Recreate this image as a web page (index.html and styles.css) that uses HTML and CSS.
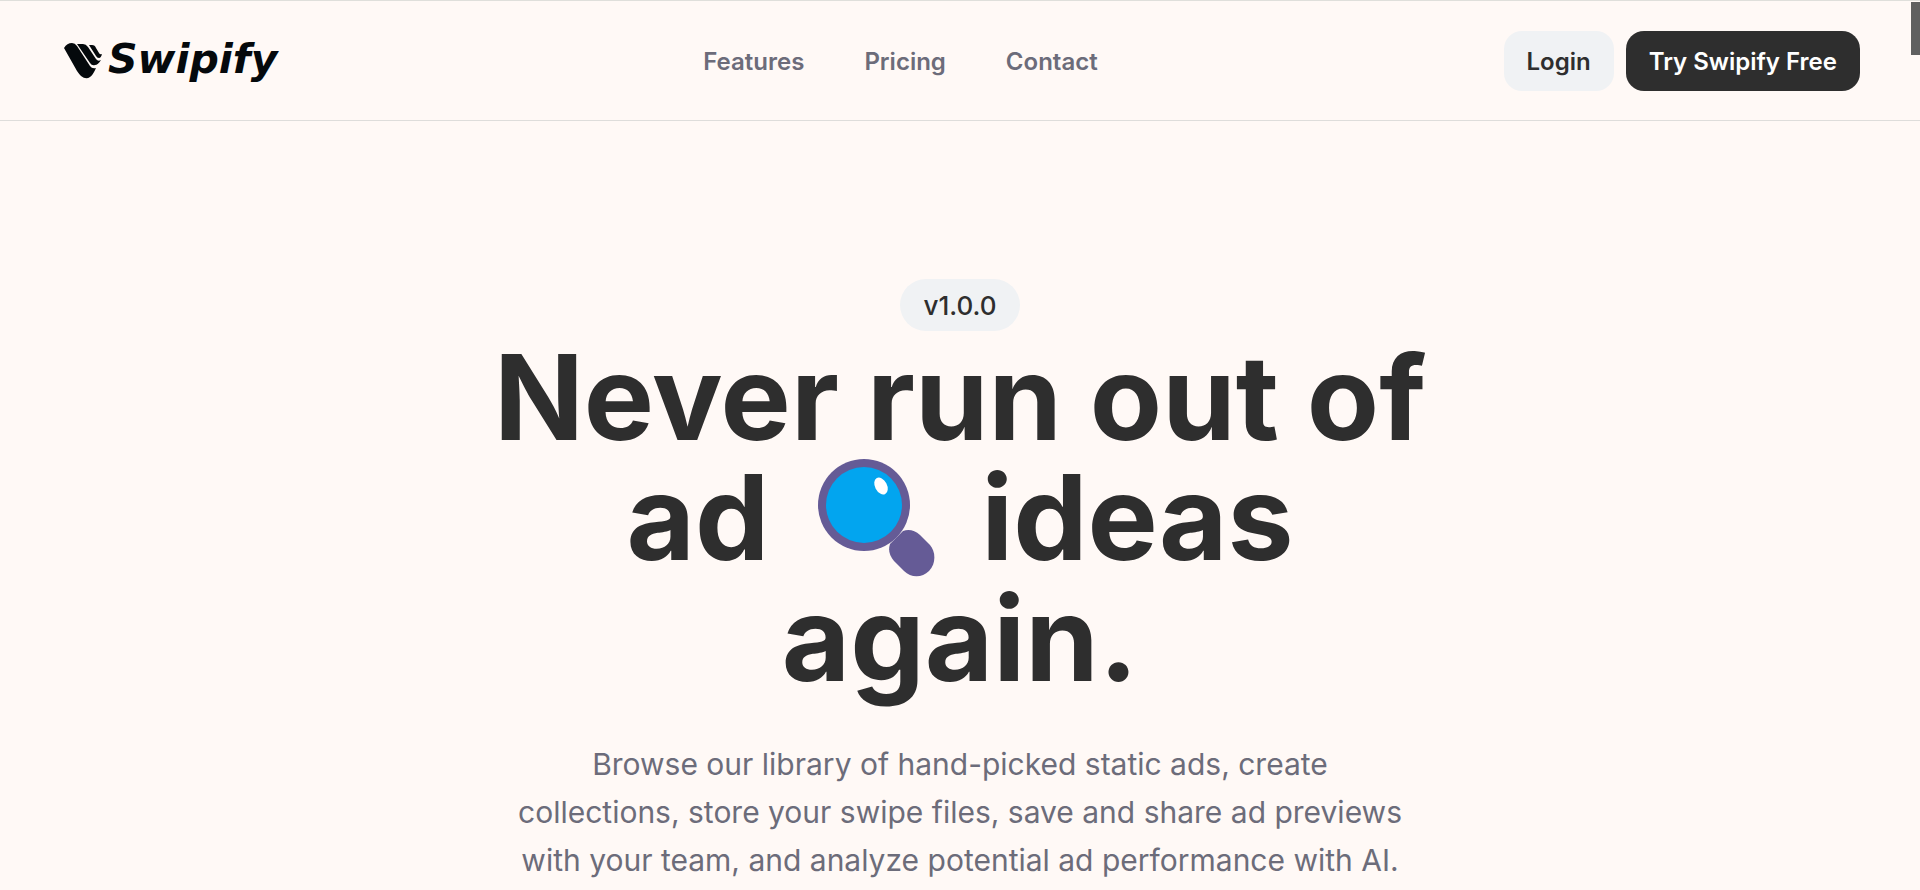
FILE: index.html
```html
<!DOCTYPE html>
<html lang="en">
<head>
<meta charset="utf-8">
<meta name="viewport" content="width=device-width, initial-scale=1">
<title>Swipify</title>
<link rel="stylesheet" href="styles.css">
</head>
<body>
<header class="header">
  <a class="logo" href="#">
    <svg class="logo-mark" viewBox="0 0 40 38" aria-hidden="true">
      <path d="M0 6Q3 1 8 1Q11 1 13 4L26 24Q28 27 32 26Q29 33 26 35Q22 38 17 34Q15 32 13 29Z"/>
      <path d="M13 2H19Q22 2 24 5L32 17Q34 20 37 18Q34 23 31 23Q28 24 26 21Z"/>
      <path d="M25 3H28Q31 3 32 6L35 11Q36 13 38 12Q37 16 35 16Q33 16 32 14Z"/>
    </svg>
    <span class="logo-text">Swipify</span>
  </a>
  <nav class="nav">
    <a href="#features">Features</a>
    <a href="#pricing">Pricing</a>
    <a href="#contact">Contact</a>
  </nav>
  <div class="actions">
    <button class="button" type="button">Login</button>
    <button class="button button-dark" type="button">Try Swipify Free</button>
  </div>
</header>
<main class="hero">
  <span class="badge">v1.0.0</span>
  <h1 class="title">Never run out of<br>ad <svg class="title-icon" viewBox="0 0 118 120" role="img" aria-label="Magnifying glass">
    <path class="glass-frame" d="M86 73Q95 70 103 77L113 87C119 94 119 106 112 113C105 120 94 120 87 113L77 103Q70 95 73 86Z"/>
    <circle class="glass-frame" cx="47" cy="47" r="46"/>
    <circle class="glass-lens" cx="47" cy="47" r="38"/>
    <ellipse class="glass-shine" cx="64" cy="28" rx="6" ry="9" transform="rotate(-28 64 28)"/>
  </svg> ideas<br>again.</h1>
  <p class="lead">Browse our library of hand-picked static ads, create<br>collections, store your swipe files, save and share ad previews<br>with your team, and analyze potential ad performance with AI.</p>
</main>
<div class="scroll-thumb" aria-hidden="true"></div>
</body>
</html>
```
FILE: styles.css
```css
* { box-sizing: border-box; }

body {
  margin: 0;
  overflow: hidden;
  background: #fff9f6;
  color: #2e2e2e;
  font-family: Inter, "Liberation Sans", sans-serif;
}

.header {
  display: flex;
  align-items: center;
  justify-content: space-between;
  padding: 30px 60px 29px;
  border-top: 1px solid #dfdfdb;
  border-bottom: 1px solid #dedddb;
}

.logo {
  display: flex;
  align-items: center;
  gap: 4px;
  padding: 0 20px 0 4px;
  color: #05090c;
  text-decoration: none;
}

.logo-mark {
  width: 40px;
  height: 38px;
  fill: currentColor;
}

.logo-text {
  padding-bottom: 4px;
  font: italic bold 41px/40px "DejaVu Sans", sans-serif;
}

.nav {
  display: flex;
  gap: 60px;
  padding-top: 2px;
}

.nav a {
  color: #6c6c7a;
  font-size: 24px;
  font-weight: 600;
  line-height: 30px;
  text-decoration: none;
}

.actions {
  display: flex;
  gap: 12px;
}

.button {
  padding: 16px 23px 14px;
  border: 0;
  border-radius: 18px;
  background: #f0f2f4;
  color: #2e2e2e;
  font: 600 24px/30px Inter, "Liberation Sans", sans-serif;
}

.button-dark {
  background: #2e2e2e;
  color: #fff;
}

.hero {
  display: flex;
  flex-direction: column;
  align-items: center;
  padding: 158px 24px 0;
  text-align: center;
}

.badge {
  padding: 12px 24px 10px;
  border-radius: 26px;
  background: #f0f2f4;
  font-size: 26px;
  font-weight: 500;
  line-height: 30px;
}

.title {
  margin: 6px 0 0;
  font-size: 118px;
  font-weight: 700;
  line-height: 120px;
}

.title-icon {
  width: 118px;
  height: 120px;
  margin: 0 18px 0 20px;
  vertical-align: -18px;
}

.glass-frame { fill: #655b96; }
.glass-lens { fill: #02a5ef; }
.glass-shine { fill: #fff; }

.lead {
  margin: 42px 0 0;
  color: #6c6c7a;
  font-size: 30px;
  line-height: 48px;
}

.scroll-thumb {
  position: absolute;
  top: 2px;
  right: 0;
  width: 9px;
  height: 53px;
  background: #606060;
}
```
